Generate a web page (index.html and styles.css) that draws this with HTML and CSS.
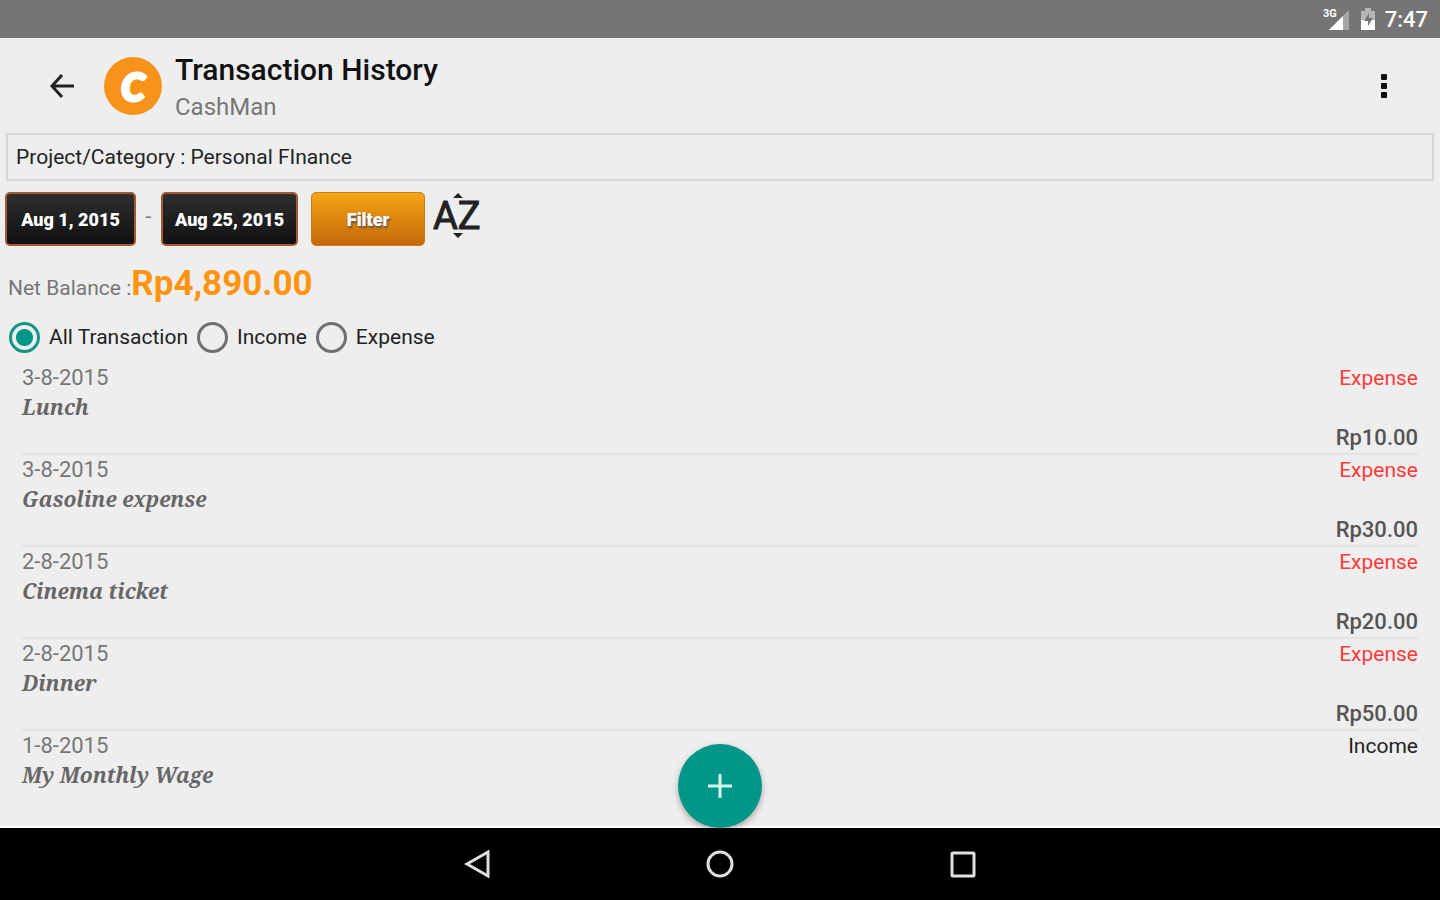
FILE: index.html
```html
<!DOCTYPE html>
<html lang="en">
  <head>
    <meta charset="utf-8">
    <title>Transaction History</title>
    <meta name="viewport" content="width=device-width, initial-scale=1">
    <link rel="stylesheet" href="styles.css">
  </head>
  <body>
    <div class="status-bar">
      <svg width="28" height="24" viewBox="0 0 28 24">
        <path d="M26 3v20H6z" fill="#a6a6a6"/>
        <path d="M20 9v14H6z" fill="#fff"/>
        <text x="0" y="10" class="network">3G</text>
      </svg>
      <svg width="16" height="24" viewBox="0 0 16 24">
        <path d="M5 1h6v3h4v19H1V4h4z" fill="#b5b5b5"/>
        <path d="M1 13h14v10H1z" fill="#fff"/>
        <path d="M9 6l-5 8h4v5l5-8H9z" fill="#757575"/>
      </svg>
      <span>7:47</span>
    </div>

    <header>
      <button class="icon-button" aria-label="Back">
        <svg width="24" height="24" viewBox="0 0 24 24" fill="none" stroke="#222" stroke-width="3">
          <path d="M24 12H3M12 1L2 12l10 11"/>
        </svg>
      </button>
      <div class="logo">C</div>
      <div class="titles">
        <h1>Transaction History</h1>
        <p>CashMan</p>
      </div>
      <button class="icon-button" aria-label="More options">
        <svg width="6" height="24" viewBox="0 0 6 24" fill="#111">
          <rect width="6" height="6" rx="1"/>
          <rect y="9" width="6" height="6" rx="1"/>
          <rect y="18" width="6" height="6" rx="1"/>
        </svg>
      </button>
    </header>

    <main>
      <div class="project">Project/Category : Personal FInance</div>

      <div class="filters">
        <button class="date-button">Aug 1, 2015</button>
        <span class="dash">-</span>
        <button class="date-button">Aug 25, 2015</button>
        <button class="filter-button">Filter</button>
        <button class="icon-button" aria-label="Sort">
          <svg width="48" height="54" viewBox="0 0 48 54" fill="#222">
            <text x="0" y="37" class="sort-text">AZ</text>
            <path d="M20 6l5-5 5 5zM20 41h10l-5 5z"/>
          </svg>
        </button>
      </div>

      <div class="balance">Net Balance :<strong>Rp4,890.00</strong></div>

      <div class="types">
        <label><input type="radio" name="type" checked>All Transaction</label>
        <label><input type="radio" name="type">Income</label>
        <label><input type="radio" name="type">Expense</label>
      </div>

      <ul class="records">
        <li>
          <span class="date">3-8-2015</span>
          <span class="type expense">Expense</span>
          <span class="note">Lunch</span>
          <span class="amount">Rp10.00</span>
        </li>
        <li>
          <span class="date">3-8-2015</span>
          <span class="type expense">Expense</span>
          <span class="note">Gasoline expense</span>
          <span class="amount">Rp30.00</span>
        </li>
        <li>
          <span class="date">2-8-2015</span>
          <span class="type expense">Expense</span>
          <span class="note">Cinema ticket</span>
          <span class="amount">Rp20.00</span>
        </li>
        <li>
          <span class="date">2-8-2015</span>
          <span class="type expense">Expense</span>
          <span class="note">Dinner</span>
          <span class="amount">Rp50.00</span>
        </li>
        <li>
          <span class="date">1-8-2015</span>
          <span class="type">Income</span>
          <span class="note">My Monthly Wage</span>
        </li>
      </ul>

      <button class="add-button" aria-label="Add transaction">
        <svg width="26" height="26" viewBox="0 0 26 26" stroke="#d8f5f0" stroke-width="3">
          <path d="M13 1v24M1 13h24"/>
        </svg>
      </button>
    </main>

    <nav>
      <button class="icon-button" aria-label="Back">
        <svg width="28" height="32" viewBox="0 0 28 32" fill="none" stroke="#e0e0e0" stroke-width="3">
          <path d="M25 4v24L4 16z"/>
        </svg>
      </button>
      <button class="icon-button" aria-label="Home">
        <svg width="28" height="32" viewBox="0 0 28 32" fill="none" stroke="#e0e0e0" stroke-width="3">
          <circle cx="14" cy="16" r="12"/>
        </svg>
      </button>
      <button class="icon-button" aria-label="Recent apps">
        <svg width="28" height="32" viewBox="0 0 28 32" fill="none" stroke="#e0e0e0" stroke-width="3">
          <rect x="3" y="5" width="22" height="23" rx="1"/>
        </svg>
      </button>
    </nav>
  </body>
</html>
```
FILE: styles.css
```css
* {
  box-sizing: border-box;
}
body {
  display: flex;
  flex-direction: column;
  min-height: 100vh;
  margin: 0;
  background-color: #eee;
  color: #222;
  font-family: Roboto, sans-serif;
  font-size: 21px;
}
h1, p, ul {
  margin: 0;
  padding: 0;
}
button {
  font-family: inherit;
  cursor: pointer;
}
svg {
  display: block;
}
.icon-button {
  background: none;
  border: none;
  padding: 0;
}
.status-bar {
  display: flex;
  align-items: center;
  justify-content: flex-end;
  gap: 9px;
  height: 38px;
  padding-right: 12px;
  background-color: #757575;
  color: #fff;
  font-size: 22px;
  font-weight: 500;
}
.network {
  font-size: 11px;
  font-weight: 700;
  fill: #fff;
}
header {
  display: flex;
  align-items: center;
  height: 95px;
  padding: 0 53px 0 50px;
}
.logo {
  display: flex;
  align-items: center;
  justify-content: center;
  width: 58px;
  height: 58px;
  margin: 0 13px 0 30px;
  border-radius: 50%;
  background-color: #f7931a;
  color: #fff;
  font-family: Lato, sans-serif;
  font-size: 38px;
  font-style: italic;
  font-weight: 900;
  -webkit-text-stroke: 3px #fff;
}
.titles {
  flex: 1;
  padding-top: 4px;
}
h1 {
  font-size: 30px;
  font-weight: 500;
  line-height: 38px;
  color: #111;
}
.titles p {
  font-size: 24px;
  line-height: 36px;
  color: #777;
}
main {
  position: relative;
  flex: 1;
  border-bottom: 2px solid #fff;
}
.project {
  margin: 0 6px;
  padding: 0 8px;
  border: 2px solid #d6d6d6;
  line-height: 44px;
}
.filters {
  display: flex;
  align-items: center;
  height: 76px;
  padding: 0 5px;
}
.date-button, .filter-button {
  height: 54px;
  border-radius: 5px;
  color: #fff;
  font-size: 18px;
  font-weight: 900;
}
.date-button {
  min-width: 131px;
  padding: 0 12px;
  border: 2px solid #a5592f;
  background: linear-gradient(#2e2e2e, #111);
}
.dash {
  width: 25px;
  padding-bottom: 6px;
  text-align: center;
  color: #777;
}
.filter-button {
  width: 114px;
  margin: 0 8px 0 13px;
  border: 1px solid #c87a1c;
  background: linear-gradient(#f4a614, #c4670a);
  text-shadow: 1px 2px 2px #555;
}
.sort-text {
  font-size: 38px;
  stroke: #222;
}
.balance {
  height: 54px;
  padding-left: 8px;
  line-height: 54px;
  color: #777;
}
.balance strong {
  color: #ff9410;
  font-size: 35px;
  font-weight: 700;
}
.types {
  display: flex;
  gap: 9px;
  height: 52px;
  padding-left: 9px;
}
.types label {
  display: flex;
  align-items: center;
  gap: 9px;
}
.types input {
  appearance: none;
  width: 31px;
  height: 31px;
  margin: 0;
  border: 3px solid #707070;
  border-radius: 50%;
}
.types input:checked {
  border-color: #159788;
  background: radial-gradient(circle, #009688 8px, transparent 9px);
}
.records {
  padding: 0 22px;
  list-style: none;
}
.records li {
  display: grid;
  grid-template-columns: 1fr auto;
  grid-template-rows: 30px 30px 30px;
  line-height: 30px;
  border-bottom: 2px solid #e2e2e2;
}
.records li:last-child {
  border-bottom: none;
}
.date {
  color: #777;
  font-size: 22px;
}
.type {
  text-align: right;
}
.expense {
  color: #ff3b3b;
}
.note {
  color: #666;
  font-family: "Noto Serif", "DejaVu Serif Condensed", "DejaVu Serif", serif;
  font-style: italic;
  font-weight: 700;
  line-height: 28px;
}
.amount {
  grid-row: 3;
  grid-column: 2;
  color: #555;
  font-size: 22px;
  font-weight: 500;
  text-align: right;
}
.add-button {
  display: flex;
  align-items: center;
  justify-content: center;
  position: absolute;
  bottom: -2px;
  left: calc(50% - 42px);
  width: 84px;
  height: 84px;
  border: none;
  border-radius: 50%;
  background-color: #009688;
  box-shadow: 0 3px 6px rgba(0, 0, 0, 0.3);
}
nav {
  position: relative;
  display: flex;
  align-items: center;
  justify-content: center;
  gap: 215px;
  height: 72px;
  background-color: #000;
}
```
